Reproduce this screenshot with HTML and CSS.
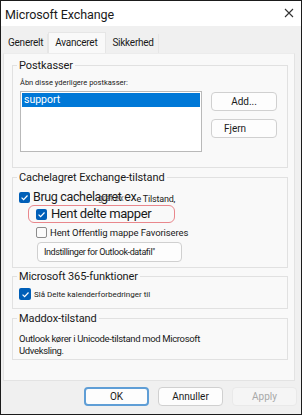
FILE: index.html
```html
<!DOCTYPE html>
<html lang="da">
<head>
  <meta charset="UTF-8">
  <meta name="viewport" content="width=device-width, initial-scale=1.0">
  <title>Microsoft Exchange</title>
  <link rel="stylesheet" href="styles.css">
</head>
<body>
  <div class="window">
    <div class="titlebar">
      <span class="title">Microsoft Exchange</span>
      <span class="close">
        <svg width="10" height="10" viewBox="0 0 10 10"><path d="M1 1 L9 9 M9 1 L1 9" stroke="#333" stroke-width="1.1" fill="none"/></svg>
      </span>
    </div>

    <div class="tabs">
      <div class="tab">Generelt</div>
      <div class="tab active">Avanceret</div>
      <div class="tab">Sikkerhed</div>
    </div>

    <div class="panel">
      <div class="group group-mail">
        <div class="group-title">Postkasser</div>
        <div class="hint">Åbn disse yderligere postkasser:</div>
        <div class="mail-row">
          <div class="listbox">
            <div class="list-item selected">support</div>
          </div>
          <div class="mail-buttons">
            <button class="btn">Add...</button>
            <button class="btn btn-left">Fjern</button>
          </div>
        </div>
      </div>

      <div class="group group-cache">
        <div class="group-title">Cachelagret Exchange-tilstand</div>
        <div class="check-row row-big">
          <span class="check"><svg width="12" height="12" viewBox="0 0 12 12"><path d="M2.8 6.2 L5 8.4 L9.3 3.8" stroke="#fff" stroke-width="1.3" fill="none"/></svg></span>
          <span class="big-label">Brug cachelagret ex</span>
          <span class="ghost">gret ex</span>
          <span class="tail">e Tilstand,</span>
        </div>
        <div class="highlight">
          <span class="check"><svg width="12" height="12" viewBox="0 0 12 12"><path d="M2.8 6.2 L5 8.4 L9.3 3.8" stroke="#fff" stroke-width="1.3" fill="none"/></svg></span>
          <span class="huge-label">Hent delte mapper</span>
        </div>
        <div class="check-row row-sub">
          <span class="check off"></span>
          <span class="small-label">Hent Offentlig mappe Favoriseres</span>
        </div>
        <button class="btn btn-settings">Indstillinger for Outlook-datafil"</button>
      </div>

      <div class="group group-365">
        <div class="group-title">Microsoft 365-funktioner</div>
        <div class="check-row row-365">
          <span class="check"><svg width="12" height="12" viewBox="0 0 12 12"><path d="M2.8 6.2 L5 8.4 L9.3 3.8" stroke="#fff" stroke-width="1.3" fill="none"/></svg></span>
          <span class="tiny-label">Slå Delte kalenderforbedringer til</span>
        </div>
      </div>

      <div class="group group-mode">
        <div class="group-title">Maddox-tilstand</div>
        <p class="mode-text">Outlook kører i Unicode-tilstand mod Microsoft<br>Udveksling.</p>
      </div>
    </div>

    <div class="footer">
      <button class="btn btn-footer btn-default">OK</button>
      <button class="btn btn-footer">Annuller</button>
      <button class="btn btn-footer" disabled>Apply</button>
    </div>
  </div>
</body>
</html>
```

FILE: styles.css
```css
* {
  margin: 0;
  padding: 0;
  box-sizing: border-box;
}

body {
  font-family: Roboto, 'Noto Sans', sans-serif;
  color: #1a1a1a;
  background: #ffffff;
  white-space: nowrap;
}

.window {
  width: 302px;
  height: 415px;
  border: 1px solid #1b1b1b;
  background: #f0f0f0;
  display: flex;
  flex-direction: column;
}

.titlebar {
  height: 25px;
  background: #ffffff;
  display: flex;
  align-items: center;
  justify-content: space-between;
  padding: 1px 7px 0 4px;
}

.title {
  font-size: 12.5px;
  letter-spacing: -0.1px;
}

.close {
  display: flex;
  margin-top: -3px;
}

/* Tabs */
.tabs {
  display: flex;
  align-items: flex-end;
  height: 27px;
  padding-left: 1px;
}

.tab {
  height: 19px;
  padding: 0 4px 0 6px;
  font-size: 10px;
  letter-spacing: -0.25px;
  line-height: 18px;
  border-right: 1px solid #e6e6e6;
}

.tab.active {
  height: 21px;
  line-height: 20px;
  padding: 0 8px 0 6px;
  background: #f9f9f9;
  border: 1px solid #e6e6e6;
  border-bottom: none;
}

.panel {
  height: 328px;
  margin: 0 6px 0 2px;
  background: #f9f9f9;
  border: 1px solid #e3e3e3;
  border-top-color: #ececec;
  padding: 11px 6px 0 8px;
}

/* Group boxes */
.group {
  border: 1px solid #e1e1e1;
  padding: 0 8px 0 7px;
  display: flex;
  flex-direction: column;
  align-items: flex-start;
}

.group-title {
  font-size: 11px;
  line-height: 14px;
  letter-spacing: -0.1px;
  margin: -7px 0 0 -3px;
  padding: 0 2px;
  background: #f9f9f9;
}

.group-mail {
  height: 103px;
}

.hint {
  font-size: 7.5px;
  line-height: 12px;
  margin-top: 4px;
}

.mail-row {
  display: flex;
  gap: 9px;
  margin-top: 2px;
  width: 100%;
}

.listbox {
  width: 182px;
  height: 61px;
  background: #ffffff;
  border: 1px solid #b9b9b9;
  padding: 1px;
}

.list-item {
  font-size: 10.5px;
  line-height: 14px;
  padding-left: 2px;
}

.list-item.selected {
  background: #0078d7;
  color: #ffffff;
}

.mail-buttons {
  display: flex;
  flex-direction: column;
  gap: 8px;
  padding-top: 1px;
}

.btn {
  font-family: inherit;
  font-size: 10px;
  color: #1a1a1a;
  background: #fdfdfd;
  border: 1px solid #d0d0d0;
  border-radius: 4px;
  width: 66px;
  height: 19px;
  white-space: nowrap;
}

.btn-left {
  text-align: left;
  padding-left: 12px;
}

.group-cache {
  margin-top: 9px;
  height: 91px;
}

.check-row {
  display: flex;
  align-items: center;
}

.check {
  width: 11px;
  height: 11px;
  border-radius: 2px;
  background: #005fb8;
  display: flex;
  align-items: center;
  justify-content: center;
  flex-shrink: 0;
}

.check svg {
  width: 11px;
  height: 11px;
}

.check.off {
  background: #fbfbfb;
  border: 1px solid #8c8c8c;
}

.row-big {
  position: relative;
  height: 16px;
  margin: 4px 0 0 -1px;
}

.big-label {
  font-size: 12.5px;
  letter-spacing: -0.35px;
  margin-left: 3px;
  line-height: 16px;
}

.ghost {
  position: absolute;
  left: 79px;
  top: 4px;
  font-size: 8.5px;
  color: #3a3a3a;
  opacity: 0.75;
}

.tail {
  font-size: 9px;
  margin: 4px 0 0 0;
  letter-spacing: -0.2px;
}

.highlight {
  display: flex;
  align-items: center;
  width: 147px;
  height: 18px;
  margin-left: 8px;
  padding-left: 7px;
  border: 1px solid #e9878c;
  border-radius: 6px;
}

.huge-label {
  font-size: 13px;
  letter-spacing: -0.4px;
  margin-left: 4px;
  line-height: 16px;
}

.row-sub {
  height: 12px;
  margin: 3px 0 0 16px;
}

.small-label {
  font-size: 9.5px;
  margin-left: 3px;
  letter-spacing: -0.1px;
}

.btn-settings {
  width: 145px;
  height: 20px;
  margin: 4px 0 0 17px;
  text-align: left;
  padding-left: 6px;
  font-size: 9px;
  letter-spacing: -0.4px;
}

.group-365 {
  margin-top: 8px;
  height: 33px;
}

.row-365 {
  height: 14px;
  margin: 3px 0 0 -1px;
}

.row-365 .check {
  width: 12px;
  height: 12px;
}

.tiny-label {
  font-size: 8px;
  margin-left: 3px;
}

.group-mode {
  margin-top: 9px;
  height: 42px;
}

.mode-text {
  font-size: 9.5px;
  line-height: 11.5px;
  margin: 7px 0 0 -1px;
  letter-spacing: -0.35px;
}

/* Footer buttons */
.footer {
  display: flex;
  justify-content: flex-end;
  gap: 9px;
  padding: 6px 4px 0 0;
}

.btn-footer {
  width: 65px;
  height: 19px;
  font-size: 10px;
  border-radius: 4px;
}

.btn-default {
  border: 2px solid #5f9ed6;
}

.btn-footer:disabled {
  color: #a8a8a8;
  background: #f5f5f5;
  border-color: #e9e9e9;
}
```
